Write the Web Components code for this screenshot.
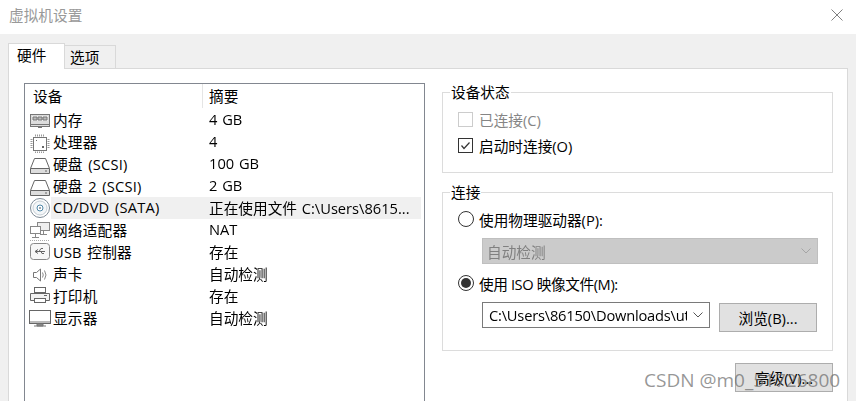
<!DOCTYPE html>
<html lang="zh">
<head>
<meta charset="utf-8">
<title>虚拟机设置</title>
<style>
html, body { margin: 0; padding: 0; background: #fff; overflow: hidden; }
body { font: 14.67px "Open Sans", "Noto Sans CJK SC", sans-serif; color: #000; }
</style>
</head>
<body>
<vm-settings></vm-settings>

<script>
const icons = {
  memory: `<rect x="1.5" y="5.5" width="19" height="12" fill="#ddd" stroke="#777"/><rect x="3" y="7" width="16" height="5" fill="#eee" stroke="none"/><path d="M4 8h4v3H4zM9 8h4v3H9zM14 8h4v3h-4z" fill="#bbb" stroke="#777"/><path d="M2 15.500h18M9 18.500h4" stroke="#777"/>`,
  cpu: `<g transform="translate(0 2)"><rect x="4.5" y="4.5" width="13" height="13" fill="#fff" stroke="#777"/><path d="M6 2.5h10M6 19.5h10M2.5 6v10M19.5 6v10" stroke="#999" stroke-dasharray="1 1" stroke-width="2"/><rect x="13" y="13" width="2" height="2" fill="#666"/><rect x="7" y="7" width="1" height="1" fill="#777"/></g>`,
  disk: `<g transform="translate(0 2)"><path d="M1.5 13.5 5.5 3.5h11l4 10v5h-19z" fill="#fff" stroke="#666"/><path d="M1.5 13.5h19" stroke="#666"/><path d="M2 14h18v4H2z" fill="#ddd"/><path d="M16 16h2" stroke="#666"/></g>`,
  cd: `<circle cx="11" cy="11" r="9.5" fill="#fff" stroke="#7d8a96"/><circle cx="11" cy="11" r="7" fill="#f3f6f8" stroke="#c4cdd4"/><circle cx="11" cy="11" r="3" fill="#fff" stroke="#4f87a8"/><circle cx="11" cy="11" r="1" fill="#7d8a96"/>`,
  net: `<g transform="translate(0 2)"><rect x="8.5" y="1.5" width="12" height="8" fill="#eee" stroke="#888"/><path d="M14.500 10v3M11 13.500h7" stroke="#888"/><rect x="1.500" y="5.500" width="10" height="7" fill="#fff" stroke="#888"/><path d="M6.500 13v3M3 16.500h7" stroke="#888"/><path d="M1 19.500h19" stroke="#aaa" stroke-dasharray="1 1"/></g>`,
  usb: `<rect x="1.500" y="2.500" width="19" height="16" rx="3" fill="#f7f7f7" stroke="#888"/><path d="M6 10.500h10M6 10.500l3-2M6 10.500l3 2M10 10.500l2-3h2M12 10.500l1 2h2" fill="none" stroke="#666"/>`,
  sound: `<g transform="translate(0 1)"><path d="M4.500 8.500h3l4-3.500v12l-4-3.500h-3z" fill="#fff" stroke="#777"/><path d="M13.500 8.500q1.500 2.500 0 5M15.500 6.500q3 4.500 0 9" fill="none" stroke="#888"/></g>`,
  printer: `<g transform="translate(0 1)"><rect x="5.500" y="1.500" width="11" height="5" fill="#fff" stroke="#666"/><path d="M1.500 7.500h19v7h-4v-2h-11v2h-4z" fill="#f2f2f2" stroke="#666"/><rect x="5.500" y="12.500" width="11" height="4" fill="#fff" stroke="#666"/><path d="M15 9.500h3" stroke="#666"/></g>`,
  monitor: `<g transform="translate(0 2)"><rect x="0.500" y="1.500" width="21" height="13" fill="#fff" stroke="#666"/><path d="M1 13h20" stroke="#bbb" stroke-width="2"/><path d="M8 15h6v2H8zM5 17h12" fill="#999" stroke="#777"/></g>`
};

const deviceRowTmp = document.createElement('template');
deviceRowTmp.innerHTML = `
<style>
:host { display: flex; height: 22px; align-items: center; padding-left: 4px; }
svg { width: 22px; height: 22px; flex: none; }
.sel { flex: 1; display: flex; height: 100%; align-items: center; padding-left: 2px; }
:host([selected]) .sel { background: #f0f0f0; margin-right: 3px; }
.name { width: 156px; flex: none; white-space: nowrap; margin-top: -2px; letter-spacing: .2px; word-spacing: 1.5px; }
.sum { white-space: nowrap; margin-top: -2px; word-spacing: 1px; will-change: opacity; }
</style>
<svg viewBox="0 0 22 22" fill="none"></svg>
<div class="sel"><div class="name"><slot></slot></div><div class="sum"></div></div>
`;

class DeviceRow extends HTMLElement {
  connectedCallback() {
    if (this.rendered) return;
    this.rendered = true;
    const root = this.attachShadow({ mode: 'open' });
    root.appendChild(deviceRowTmp.content.cloneNode(true));
    root.querySelector('svg').innerHTML = icons[this.getAttribute('icon')];
    root.querySelector('.sum').textContent = this.getAttribute('summary');
  }
}

const deviceListTmp = document.createElement('template');
deviceListTmp.innerHTML = `
<style>
:host { display: block; border: 1px solid #828790; background: #fff; box-sizing: border-box; height: 340px; }
.head { display: flex; height: 25px; }
.head div { height: 24px; line-height: 24px; box-sizing: border-box; }
.head div:first-child { width: 178px; padding-left: 8px; border-right: 1px solid #e5e5e5; }
.head div:last-child { padding-left: 6px; }
</style>
<div class="head"><div>设备</div><div>摘要</div></div>
<slot></slot>
`;

class DeviceList extends HTMLElement {
  connectedCallback() {
    if (this.shadowRoot) return;
    this.attachShadow({ mode: 'open' }).appendChild(deviceListTmp.content.cloneNode(true));
  }
}

const groupBoxTmp = document.createElement('template');
groupBoxTmp.innerHTML = `
<style>
:host { display: block; }
fieldset { margin: 0; border: 1px solid #dcdcdc; padding: 0 0 0 15px; height: var(--group-height); box-sizing: border-box; min-width: 0; }
legend { padding: 0 1px; margin-left: -8px; line-height: 20px; }
</style>
<fieldset><legend></legend><slot></slot></fieldset>
`;

class GroupBox extends HTMLElement {
  connectedCallback() {
    if (this.shadowRoot) return;
    const root = this.attachShadow({ mode: 'open' });
    root.appendChild(groupBoxTmp.content.cloneNode(true));
    root.querySelector('legend').textContent = this.getAttribute('label');
  }
}

const winCheckTmp = document.createElement('template');
winCheckTmp.innerHTML = `
<style>
:host { display: flex; align-items: center; height: 26px; white-space: nowrap; }
.box { width: 13px; height: 13px; border: 1px solid #333; margin-right: 6px; flex: none; background: #fff; display: flex; }
:host([disabled]) { color: #858585; }
:host([disabled]) .box { border-color: #ccc; }
svg { width: 13px; height: 13px; }
</style>
<div class="box"><svg viewBox="0 0 13 13" fill="none"></svg></div><slot></slot>
`;

class WinCheck extends HTMLElement {
  connectedCallback() {
    if (this.shadowRoot) return;
    const root = this.attachShadow({ mode: 'open' });
    root.appendChild(winCheckTmp.content.cloneNode(true));
    if (this.hasAttribute('checked')) {
      root.querySelector('svg').innerHTML = '<path d="M2.500 6.500 5 9.500l5.500-6" stroke="#333" stroke-width="1.200"/>';
    }
  }
}

const winRadioTmp = document.createElement('template');
winRadioTmp.innerHTML = `
<style>
:host { display: flex; align-items: center; height: 26px; white-space: nowrap; }
.dot { width: 14px; height: 14px; border: 1px solid #333; border-radius: 50%; margin-right: 5px; flex: none; background: #fff; display: flex; align-items: center; justify-content: center; }
:host([checked]) .dot::after { content: ""; width: 10px; height: 10px; border-radius: 50%; background: #333; }
</style>
<div class="dot"></div><slot></slot>
`;

class WinRadio extends HTMLElement {
  connectedCallback() {
    if (this.shadowRoot) return;
    this.attachShadow({ mode: 'open' }).appendChild(winRadioTmp.content.cloneNode(true));
  }
}

const winComboTmp = document.createElement('template');
winComboTmp.innerHTML = `
<style>
:host { display: flex; align-items: center; height: 26px; box-sizing: border-box; border: 1px solid #7a7a7a; background: #fff; padding: 0 6px 0 6px; white-space: nowrap; overflow: hidden; }
:host([disabled]) { border-color: #bfbfbf; background: #cbcbcb; color: #808080; padding-left: 4px; }
.text { flex: 1; overflow: hidden; will-change: opacity; }
svg { width: 10px; height: 6px; flex: none; margin-left: 6px; stroke: #555; }
:host([disabled]) svg { stroke: #a5a5a5; }
</style>
<div class="text"><slot></slot></div>
<svg viewBox="0 0 10 6" fill="none"><path d="M.500.500 5 5 9.500.500"/></svg>
`;

class WinCombo extends HTMLElement {
  connectedCallback() {
    if (this.shadowRoot) return;
    this.attachShadow({ mode: 'open' }).appendChild(winComboTmp.content.cloneNode(true));
  }
}

const winButtonTmp = document.createElement('template');
winButtonTmp.innerHTML = `
<style>
:host { display: flex; align-items: center; justify-content: center; width: 98px; height: 29px; box-sizing: border-box; border: 1px solid #adadad; background: #e1e1e1; white-space: nowrap; }
</style>
<slot></slot>
`;

class WinButton extends HTMLElement {
  connectedCallback() {
    if (this.shadowRoot) return;
    this.attachShadow({ mode: 'open' }).appendChild(winButtonTmp.content.cloneNode(true));
  }
}

const vmSettingsTmp = document.createElement('template');
vmSettingsTmp.innerHTML = `
<style>
:host { display: flex; flex-direction: column; width: 856px; height: 401px; overflow: hidden; position: relative; background: #f0f0f0; }
.title { height: 34px; flex: none; box-sizing: border-box; background: #fff; display: flex; align-items: center; justify-content: space-between; padding: 0 13px 4px 9px; color: #999; }
.title span { margin-top: -2px; }
.title svg { width: 12px; height: 12px; }
.tabs { height: 34px; flex: none; display: flex; align-items: flex-end; padding-left: 8px; box-sizing: border-box; position: relative; z-index: 1; }
.tab { box-sizing: border-box; border: 1px solid #d9d9d9; display: flex; align-items: center; }
.tab.on { width: 57px; height: 26px; background: #fff; border-bottom: 0; margin-bottom: -1px; padding: 0 0 4px 8px; }
.tab.off { width: 51px; height: 23px; border-left: 0; border-bottom: 0; background: #f0f0f0; padding: 0 0 1px 5px; }
.panel { flex: 1; margin: 0 8px; background: #fff; border: 1px solid #d9d9d9; border-bottom: 0; display: flex; gap: 17px; padding: 14px 0 0 15px; overflow: hidden; }
device-list { width: 401px; flex: none; }
.right { width: 391px; flex: none; margin-top: -1px; }
.status { --group-height: 91px; }
.conn { --group-height: 169px; margin-top: 9px; }
.status win-check:first-of-type { margin-top: 4px; }
.conn win-radio { margin-top: 4px; }
.indent { margin: 6px 0 0 24px; width: 336px; }
.conn win-radio.iso { margin-top: 6px; letter-spacing: -.4px; }
.iso-row { display: flex; align-items: flex-start; gap: 9px; margin: 6px 0 0 24px; }
.iso-row win-combo { width: 228px; letter-spacing: -.2px; }
.iso-row win-button { margin-top: 1px; }
.bottom { display: flex; justify-content: flex-end; margin-top: 12px; }
.mark { position: absolute; left: 644px; top: 367px; font: 19px "Open Sans", sans-serif; color: rgba(110, 110, 110, .72); white-space: nowrap; }
</style>
<div class="title"><span>虚拟机设置</span>
  <svg viewBox="0 0 12 12" fill="none" stroke="#808080"><path d="M.5.500l11 11M11.500.500l-11 11"/></svg>
</div>
<div class="tabs"><div class="tab on">硬件</div><div class="tab off">选项</div></div>
<div class="panel">
  <device-list>
    <device-row icon="memory" summary="4 GB">内存</device-row>
    <device-row icon="cpu" summary="4">处理器</device-row>
    <device-row icon="disk" summary="100 GB">硬盘 (SCSI)</device-row>
    <device-row icon="disk" summary="2 GB">硬盘 2 (SCSI)</device-row>
    <device-row icon="cd" summary="正在使用文件 C:\\Users\\8615..." selected>CD/DVD (SATA)</device-row>
    <device-row icon="net" summary="NAT">网络适配器</device-row>
    <device-row icon="usb" summary="存在">USB 控制器</device-row>
    <device-row icon="sound" summary="自动检测">声卡</device-row>
    <device-row icon="printer" summary="存在">打印机</device-row>
    <device-row icon="monitor" summary="自动检测">显示器</device-row>
  </device-list>
  <div class="right">
    <group-box class="status" label="设备状态">
      <win-check disabled>已连接(C)</win-check>
      <win-check checked>启动时连接(O)</win-check>
    </group-box>
    <group-box class="conn" label="连接">
      <win-radio>使用物理驱动器(P):</win-radio>
      <div class="indent"><win-combo disabled>自动检测</win-combo></div>
      <win-radio class="iso" checked>使用 ISO 映像文件(M):</win-radio>
      <div class="iso-row">
        <win-combo>C:\\Users\\86150\\Downloads\\ut</win-combo>
        <win-button>浏览(B)...</win-button>
      </div>
    </group-box>
    <div class="bottom"><win-button>高级(V)...</win-button></div>
  </div>
</div>
<div class="mark">CSDN @m0_51726800</div>
`;

class VmSettings extends HTMLElement {
  connectedCallback() {
    if (this.shadowRoot) return;
    this.attachShadow({ mode: 'open' }).appendChild(vmSettingsTmp.content.cloneNode(true));
  }
}

customElements.define('device-row', DeviceRow);
customElements.define('device-list', DeviceList);
customElements.define('group-box', GroupBox);
customElements.define('win-check', WinCheck);
customElements.define('win-radio', WinRadio);
customElements.define('win-combo', WinCombo);
customElements.define('win-button', WinButton);
customElements.define('vm-settings', VmSettings);
</script>
</body>
</html>
